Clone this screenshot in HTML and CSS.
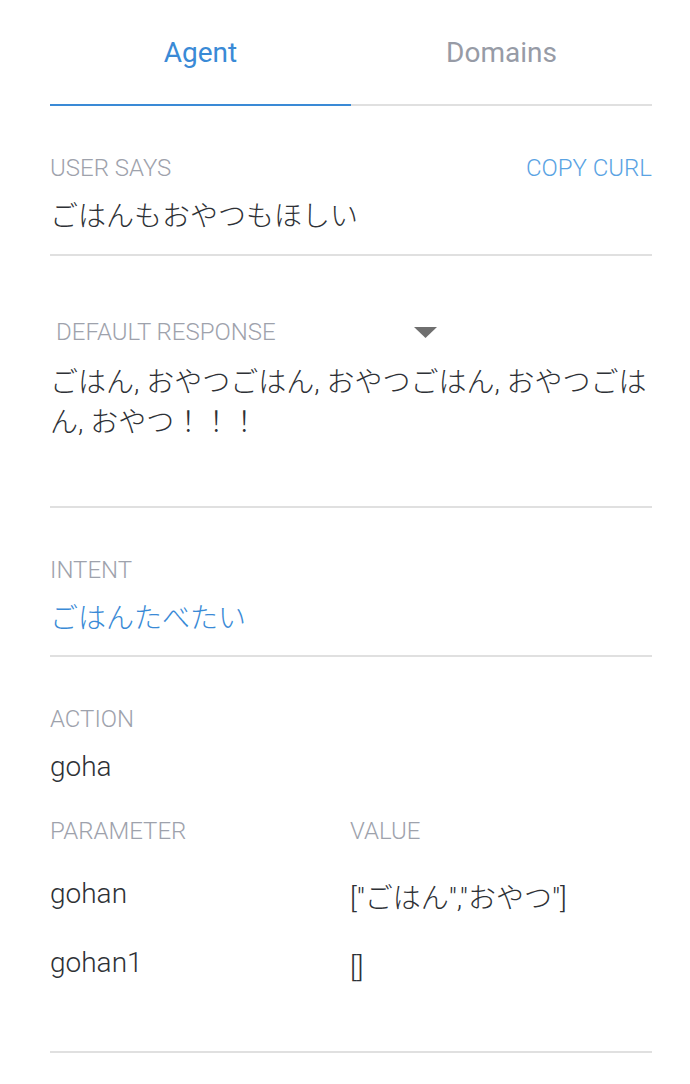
FILE: index.html
```html
<!DOCTYPE html>
<html lang="ja">
<head>
<meta charset="utf-8">
<title>Agent</title>
<link rel="stylesheet" href="styles.css">
</head>
<body>
<div class="page">
  <nav class="tabs">
    <div class="tab active">Agent</div>
    <div class="tab">Domains</div>
  </nav>

  <section class="field user-says">
    <div class="field-head">
      <span class="label">USER SAYS</span>
      <span class="copy">COPY CURL</span>
    </div>
    <div class="value">ごはんもおやつもほしい</div>
  </section>

  <section class="field response">
    <div class="spinner">
      <span class="label">DEFAULT RESPONSE</span>
      <svg class="caret" width="23" height="11" viewBox="0 0 23 11"><path d="M0 0 H23 L11.5 11 Z" fill="#6f6f6f"/></svg>
    </div>
    <div class="value response-text">ごはん, おやつごはん, おやつごはん, おやつごはん, おやつ！！！</div>
  </section>

  <section class="field intent">
    <div class="label">INTENT</div>
    <div class="value link">ごはんたべたい</div>
  </section>

  <section class="field action">
    <div class="label">ACTION</div>
    <div class="value">goha</div>
    <div class="params">
      <div class="param-head">
        <span class="label">PARAMETER</span>
        <span class="label">VALUE</span>
      </div>
      <div class="param-row">
        <span class="param-name">gohan</span>
        <span class="param-value">["ごはん","おやつ"]</span>
      </div>
      <div class="param-row">
        <span class="param-name">gohan1</span>
        <span class="param-value">[]</span>
      </div>
    </div>
  </section>
</div>
</body>
</html>
```
FILE: styles.css
```css
html, body {
  margin: 0;
  padding: 0;
  background: #ffffff;
}

body {
  font-family: Roboto, "Noto Sans CJK JP", sans-serif;
  color: #2e3136;
}

.page {
  margin: 0 38px 0 50px;
}

.tabs {
  display: grid;
  grid-template-columns: 1fr 1fr;
  border-bottom: 2px solid #e0e0e0;
}

.tab {
  height: 104px;
  display: flex;
  align-items: center;
  justify-content: center;
  font-size: 28px;
  color: #979ba6;
  border-bottom: 2px solid transparent;
  margin-bottom: -2px;
}

.tab.active {
  color: #3a8ad6;
  border-bottom-color: #3a8ad6;
}

.field {
  padding-top: 48px;
  border-bottom: 2px solid #e0e0e0;
}

.label {
  font-size: 24px;
  line-height: 28px;
  font-weight: 300;
  color: #9ea2ac;
}

.value {
  font-size: 28px;
  line-height: 40px;
  font-weight: 300;
  color: #2e3136;
  margin-top: 15px;
}

.field-head {
  display: flex;
  justify-content: space-between;
  align-items: baseline;
}

.copy {
  font-size: 24px;
  line-height: 28px;
  font-weight: 300;
  color: #5aa3e3;
}

.user-says {
  padding-bottom: 17px;
}

.spinner {
  display: flex;
  align-items: center;
  justify-content: space-between;
  width: 387px;
  box-sizing: border-box;
  padding-top: 14px;
  padding-left: 6px;
}

.caret {
  display: block;
}

.response {
  padding-bottom: 63px;
}

.response-text {
  margin-top: 17px;
}

.intent {
  padding-bottom: 16px;
}

.intent .value {
  margin-top: 15px;
}

.link {
  color: #3a8ad6;
}

.action {
  padding-bottom: 68px;
}

.action > .value {
  margin-top: 14px;
}

.params {
  margin-top: 30px;
}

.param-head {
  display: grid;
  grid-template-columns: 300px 1fr;
}

.param-row {
  display: grid;
  grid-template-columns: 300px 1fr;
  grid-template-rows: 40px;
  margin-top: 29px;
  font-size: 28px;
  line-height: 40px;
  font-weight: 300;
}

.param-value {
  padding-top: 5px;
}
```
